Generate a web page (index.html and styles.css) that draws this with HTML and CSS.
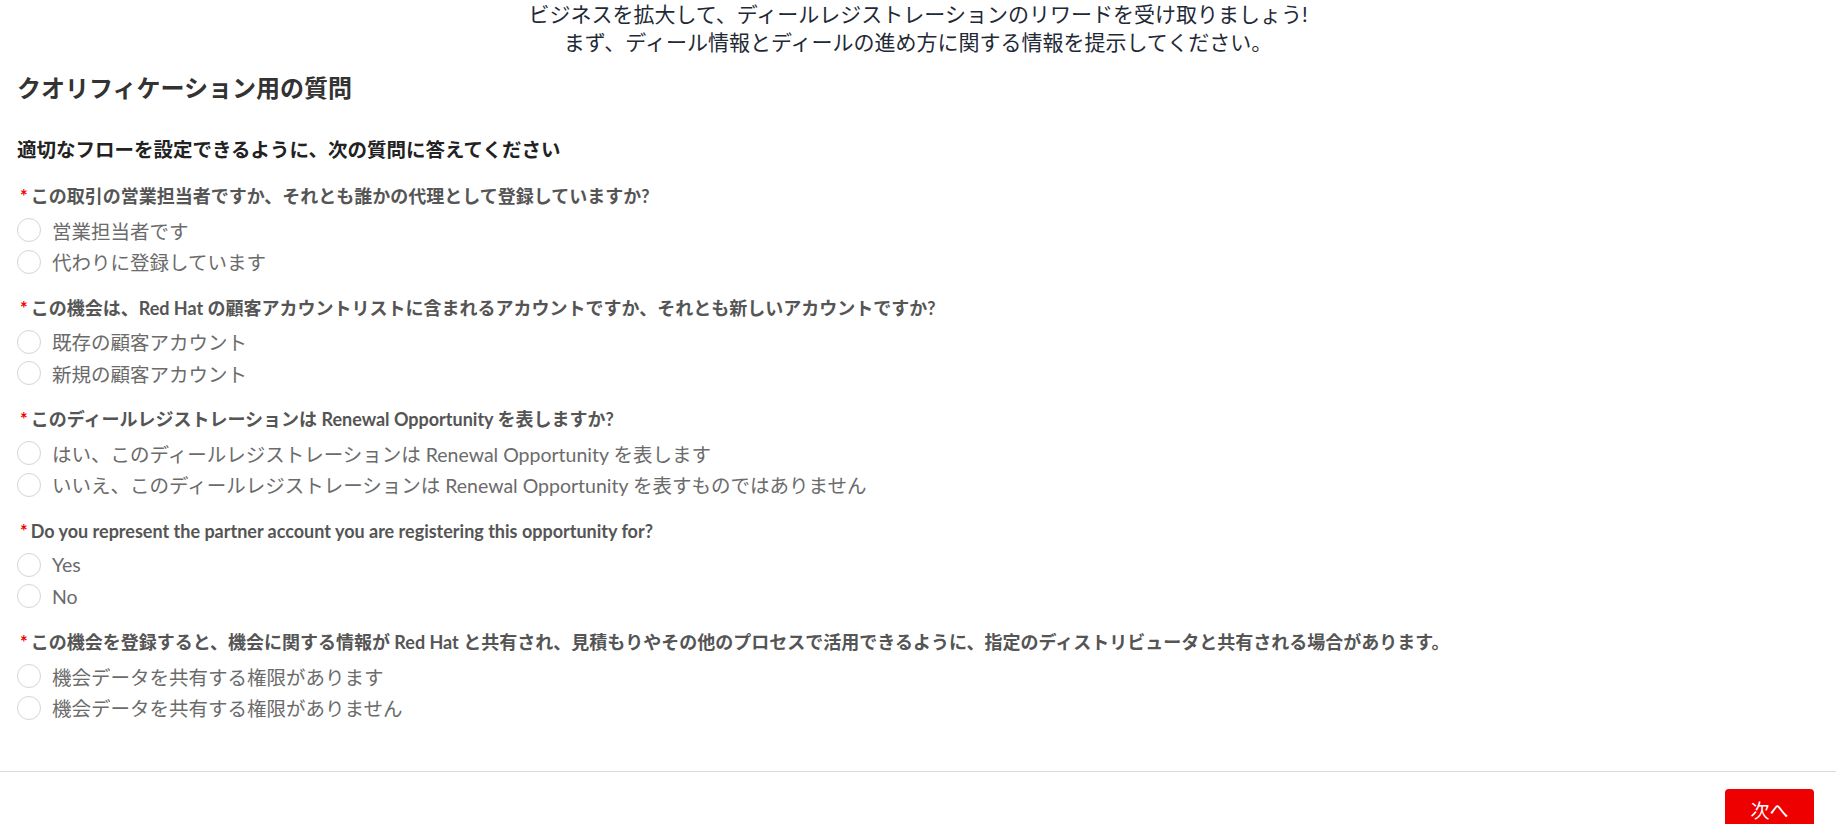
FILE: index.html
```html
<!DOCTYPE html>
<html lang="ja">
<head>
  <meta charset="UTF-8">
  <meta name="viewport" content="width=device-width, initial-scale=1.0">
  <title>クオリフィケーション用の質問</title>
  <link rel="stylesheet" href="styles.css">
</head>
<body>
  <!-- Intro -->
  <div class="intro">
    <p>ビジネスを拡大して、ディールレジストレーションのリワードを受け取りましょう!</p>
    <p>まず、ディール情報とディールの進め方に関する情報を提示してください。</p>
  </div>

  <div class="form-body">
    <h2 class="section-title">クオリフィケーション用の質問</h2>
    <h3 class="section-subtitle">適切なフローを設定できるように、次の質問に答えてください</h3>

    <div class="question">
      <div class="question-label"><span class="required">*</span>この取引の営業担当者ですか、それとも誰かの代理として登録していますか?</div>
      <div class="options">
        <label class="option"><span class="radio"></span>営業担当者です</label>
        <label class="option"><span class="radio"></span>代わりに登録しています</label>
      </div>
    </div>

    <div class="question">
      <div class="question-label"><span class="required">*</span>この機会は、Red Hat の顧客アカウントリストに含まれるアカウントですか、それとも新しいアカウントですか?</div>
      <div class="options">
        <label class="option"><span class="radio"></span>既存の顧客アカウント</label>
        <label class="option"><span class="radio"></span>新規の顧客アカウント</label>
      </div>
    </div>

    <div class="question">
      <div class="question-label"><span class="required">*</span>このディールレジストレーションは Renewal Opportunity を表しますか?</div>
      <div class="options">
        <label class="option"><span class="radio"></span>はい、このディールレジストレーションは Renewal Opportunity を表します</label>
        <label class="option"><span class="radio"></span>いいえ、このディールレジストレーションは Renewal Opportunity を表すものではありません</label>
      </div>
    </div>

    <div class="question">
      <div class="question-label"><span class="required">*</span>Do you represent the partner account you are registering this opportunity for?</div>
      <div class="options">
        <label class="option"><span class="radio"></span>Yes</label>
        <label class="option"><span class="radio"></span>No</label>
      </div>
    </div>

    <div class="question">
      <div class="question-label"><span class="required">*</span>この機会を登録すると、機会に関する情報が Red Hat と共有され、見積もりやその他のプロセスで活用できるように、指定のディストリビュータと共有される場合があります。</div>
      <div class="options">
        <label class="option"><span class="radio"></span>機会データを共有する権限があります</label>
        <label class="option"><span class="radio"></span>機会データを共有する権限がありません</label>
      </div>
    </div>
  </div>

  <!-- Footer -->
  <div class="form-footer">
    <button class="next-btn">次へ</button>
  </div>
</body>
</html>
```

FILE: styles.css
```css
/* General Styling */
body {
  font-family: Lato, "Noto Sans CJK JP", sans-serif;
  margin: 0;
  padding: 0;
  background-color: #fff;
  color: #333;
  overflow: hidden;
}

/* Intro */
.intro {
  text-align: center;
  padding-top: 0;
  font-size: 21px;
  line-height: 28px;
  color: #1f2a36;
}

.intro p {
  margin: 0;
}

/* Form Body */
.form-body {
  padding: 0 17px;
}

.section-title {
  margin: 17px 0 0;
  font-size: 24px;
  line-height: 30px;
  font-weight: 700;
  color: #333;
}

.section-subtitle {
  margin: 35px 0 0;
  font-size: 19.5px;
  line-height: 24px;
  font-weight: 700;
  color: #222;
}

.question {
  margin-top: 23px;
}

.section-subtitle + .question {
  margin-top: 23px;
}

.question-label {
  padding-left: 3px;
  font-size: 18px;
  line-height: 22px;
  font-weight: 700;
  color: #555;
  margin-bottom: 11px;
}

.required {
  color: #e00;
  margin-right: 3px;
  font-size: 18px;
}

.options {
  display: flex;
  flex-direction: column;
  gap: 7.5px;
}

.option {
  display: flex;
  align-items: center;
  height: 24px;
  font-size: 19.5px;
  color: #6b6b6b;
  cursor: pointer;
}

.radio {
  width: 22px;
  height: 22px;
  border: 1px solid #d4d4d4;
  border-radius: 50%;
  background: white;
  margin-right: 11px;
  flex-shrink: 0;
}

/* Footer */
.form-footer {
  margin-top: 51px;
  border-top: 1px solid #d9d9d9;
  padding: 17px 22px 0 0;
  display: flex;
  justify-content: flex-end;
}

.next-btn {
  width: 89px;
  height: 42px;
  background: #ee0000;
  color: white;
  border: none;
  border-radius: 4px;
  font-family: Lato, "Noto Sans CJK JP", sans-serif;
  font-size: 19px;
  cursor: pointer;
}
```
